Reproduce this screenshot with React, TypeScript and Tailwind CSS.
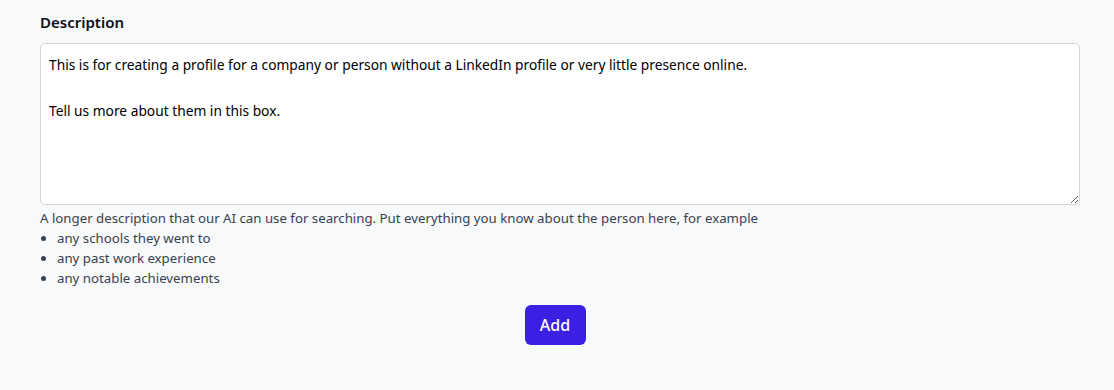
import React from "react";

export default function App() {
  return (
    <div className="min-h-[390px] w-full bg-[#f8f9fb] pt-[12px] pb-10" style={{ fontFamily: '"Noto Sans", "Open Sans", sans-serif' }}>
      <div className="pl-10 pr-[34px]">
        <label className="block text-[15px] font-semibold leading-[20px] text-[#0b0f19]">Description</label>
        <textarea
          className="mt-[11px] block h-[162px] w-full resize-y rounded-[5px] border border-[#d1d5db] bg-white px-2 py-[9px] text-[13.75px] leading-[23px] text-black outline-none"
          style={{ fontFamily: '"Noto Sans", "Open Sans", sans-serif' }}
          defaultValue={"This is for creating a profile for a company or person without a LinkedIn profile or very little presence online.\n\nTell us more about them in this box."}
        />
        <div className="mt-[3px] text-[13.25px] leading-[20px] text-[#374151]">
          <p>A longer description that our AI can use for searching. Put everything you know about the person here, for example</p>
          <ul className="list-disc pl-[17px]">
            <li>any schools they went to</li>
            <li>any past work experience</li>
            <li>any notable achievements</li>
          </ul>
        </div>
      </div>
      <div className="mt-[17px] flex justify-center pr-1">
        <button className="h-10 w-[61px] rounded-md bg-[#3b1fe2] text-[16px] font-medium text-white">Add</button>
      </div>
    </div>
  );
}
